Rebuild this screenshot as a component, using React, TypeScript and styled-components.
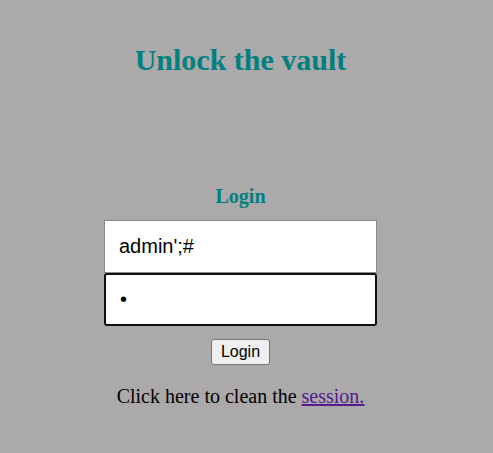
import React from 'react';
import styled, { createGlobalStyle } from 'styled-components';

const GlobalStyle = createGlobalStyle`
  html, body {
    margin: 0;
    padding: 0;
    background-color: #aba9a9;
  }
  body {
    font-family: "Liberation Serif", "Times New Roman", serif;
  }
`;

const Page = styled.div`
  width: 465px;
  margin-left: 8px;
  padding-top: 43px;
  display: flex;
  flex-direction: column;
  align-items: center;
`;

const Title = styled.h1`
  margin: 0;
  font-size: 30px;
  font-weight: bold;
  color: #008080;
`;

const Form = styled.form`
  margin-top: 108px;
  display: flex;
  flex-direction: column;
  align-items: center;
`;

const FormTitle = styled.h3`
  margin: 0 0 12px;
  font-size: 20px;
  font-weight: bold;
  color: #008080;
`;

const Field = styled.input<{ $focused?: boolean }>`
  box-sizing: border-box;
  width: 273px;
  height: 53px;
  margin: 0;
  padding: 0 14px;
  font-family: "Liberation Sans", Arial, sans-serif;
  font-size: 20px;
  color: #000;
  background: #fff;
  border: ${(p) => (p.$focused ? '2px solid #101010' : '1px solid #8a8a8a')};
  border-radius: ${(p) => (p.$focused ? '3px' : '0')};
  outline: none;
`;

const SubmitButton = styled.button`
  margin-top: 13px;
  height: 26px;
  padding: 0 9px;
  font-family: "Liberation Sans", Arial, sans-serif;
  font-size: 16px;
  color: #000;
  background: #efefef;
  border: 1px solid #767676;
  border-radius: 3px;
`;

const Note = styled.p`
  margin: 20px 0 0;
  font-size: 20px;
  color: #000;
`;

const SessionLink = styled.a`
  color: #551a8b;
`;

export default function App() {
  return (
    <>
      <GlobalStyle />
      <Page>
        <Title>Unlock the vault</Title>
        <Form onSubmit={(e) => e.preventDefault()}>
          <FormTitle>Login</FormTitle>
          <Field type="text" defaultValue="admin';#" />
          <Field type="password" defaultValue="a" $focused />
          <SubmitButton type="submit">Login</SubmitButton>
        </Form>
        <Note>
          Click here to clean the <SessionLink href="#">session.</SessionLink>
        </Note>
      </Page>
    </>
  );
}
